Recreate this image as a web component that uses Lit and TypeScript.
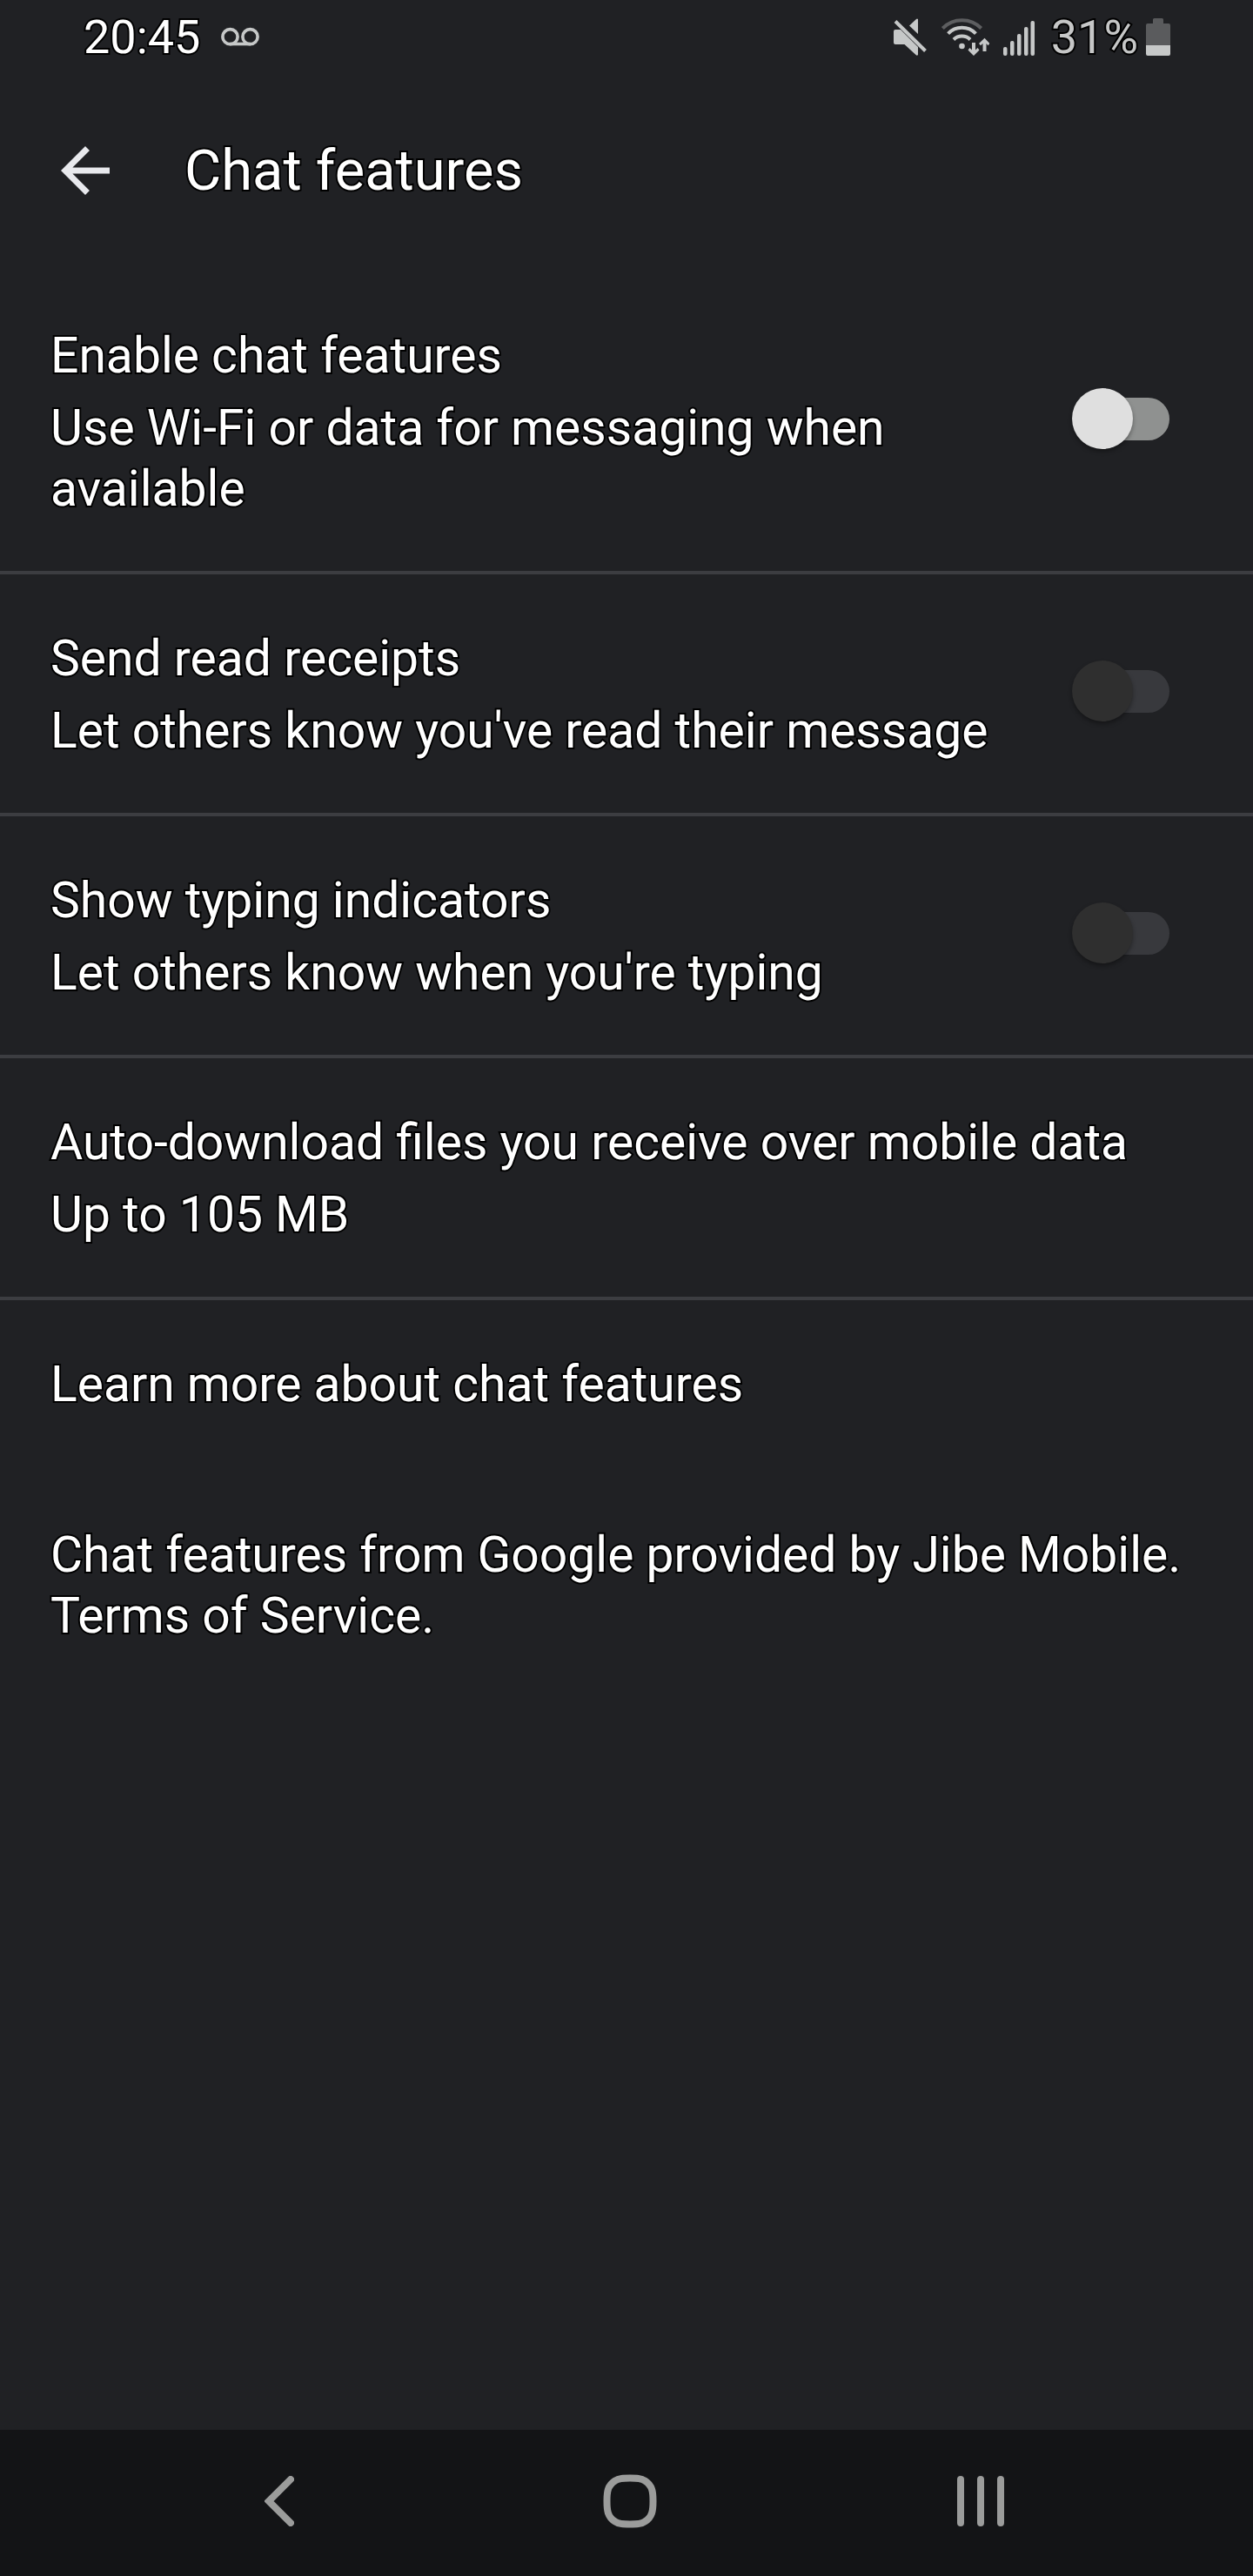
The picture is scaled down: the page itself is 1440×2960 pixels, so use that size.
import { LitElement, html, css } from "lit";
import { customElement, property } from "lit/decorators.js";

@customElement("status-bar")
class StatusBar extends LitElement {
  static styles = css`
    :host {
      display: flex;
      justify-content: space-between;
      align-items: center;
      height: 86px;
      padding: 0 95px 0 96px;
      font-size: 54px;
      line-height: 62px;
      color: #fff;
    }
    .side {
      display: flex;
      align-items: center;
    }
    .voicemail {
      margin-left: 24px;
    }
    .level {
      color: #c6c7c7;
      margin: 0 9px 0 19px;
    }
    .wifi {
      margin: 0 16px 0 17px;
    }
    svg {
      display: block;
      flex: none;
      fill: #c6c8c8;
    }
  `;

  render() {
    return html`
      <div class="side">
        <time>20:45</time>
        <svg class="voicemail" width="44" height="24" viewBox="0 0 44 24" aria-hidden="true">
          <g fill="none" stroke="#c6c8c8" stroke-width="3.6">
            <path d="M10 19.500h24" />
            <circle cx="10.500" cy="11.200" r="8.600" />
            <circle cx="33.500" cy="11.200" r="8.600" />
          </g>
        </svg>
      </div>
      <div class="side">
        <svg width="38" height="46" viewBox="0 0 38 46" aria-hidden="true">
          <path d="M28 2v17L18 9.500l8-7.500q1-1 2 0z" />
          <path d="M2 14h6l20 20v9q-1 1.500-2.500 0L12.500 31H2q-2 0-2-2V16q0-2 2-2z" />
          <path d="M2 4.500l34.500 34" fill="none" stroke="#c6c8c8" stroke-width="4" />
        </svg>
        <svg class="wifi" width="55" height="46" viewBox="0 0 55 46" aria-hidden="true">
          <g fill="none" stroke-width="4">
            <path d="M1.300 12.500a31 31 0 0 1 44.400 0" stroke="#5d5e60" />
            <path d="M7.600 18.600a22 22 0 0 1 31.800 0" stroke="#c6c8c8" />
            <path d="M14 25.500a13.500 13.500 0 0 1 19 0" stroke="#c6c8c8" />
          </g>
          <circle cx="23.500" cy="33" r="3.300" />
          <path d="M35 29h4v8.500l2.500-2.400 2 2.400L37 44l-6.500-6.500 2-2.400 2.500 2.400z" />
          <path d="M47.500 39h4v-9l2 2.200 2-2.200-6-6.300-6.500 6.300 2 2.200 2.500-2.200z" />
        </svg>
        <svg width="36" height="46" viewBox="0 0 36 46" aria-hidden="true">
          <rect x="0" y="34" width="4.500" height="10" rx="2" />
          <rect x="8" y="27" width="4.500" height="17" rx="2" />
          <rect x="16" y="19" width="4.500" height="25" rx="2" />
          <rect x="24" y="11" width="4.500" height="33" rx="2" />
          <rect x="31.500" y="4" width="4.500" height="40" rx="2" />
        </svg>
        <span class="level">31%</span>
        <svg width="28" height="46" viewBox="0 0 28 46" aria-hidden="true">
          <path d="M8 7V2.500q0-1.500 1.500-1.500h9q1.500 0 1.500 1.500V7h6q2 0 2 2v23H0V9q0-2 2-2z" fill="#5a5b5d" />
          <path d="M0 32h28v10q0 2-2 2H2q-2 0-2-2z" />
        </svg>
      </div>
    `;
  }
}

@customElement("setting-row")
class SettingRow extends LitElement {
  @property() heading = "";
  @property() summary = "";
  @property({ type: Boolean }) toggle = false;
  @property({ type: Boolean }) disabled = false;

  static styles = css`
    :host {
      display: block;
      border-bottom: 4px solid #3c3d41;
    }
    .row {
      box-sizing: border-box;
      display: flex;
      align-items: center;
      justify-content: space-between;
      gap: 56px;
      width: 100%;
      padding: 0 96px 0 58px;
      color: inherit;
      background: none;
      border: 0;
      font: inherit;
      text-align: left;
    }
    button.row {
      padding-right: 58px;
    }
    .text {
      display: flex;
      flex-direction: column;
      gap: 13px;
      padding: 62px 0 59px;
    }
    .switch {
      appearance: none;
      flex: none;
      display: grid;
      grid-template-columns: 14px 56px 42px;
      align-items: center;
      width: 112px;
      height: 70px;
      margin: 0 0 6px;
    }
    .switch::before {
      content: "";
      grid-area: 1 / 2 / 2 / 4;
      height: 49px;
      border-radius: 25px;
      background: #8f9190;
    }
    .switch::after {
      content: "";
      grid-area: 1 / 1 / 2 / 3;
      height: 70px;
      border-radius: 50%;
      background: #dfdfdf;
      box-shadow: 0 3px 5px rgba(0, 0, 0, 0.35);
    }
    .switch:checked::after {
      grid-area: 1 / 2 / 2 / 4;
      margin-left: 28px;
    }
    .switch:disabled::before {
      background: #38393d;
    }
    .switch:disabled::after {
      background: #2f2f2f;
    }
  `;

  render() {
    const text = html`
      <span class="text"><span>${this.heading}</span><span>${this.summary}</span></span>
    `;
    if (!this.toggle) {
      return html`<button class="row" type="button">${text}</button>`;
    }
    return html`
      <label class="row">
        ${text}
        <input class="switch" type="checkbox" role="switch" ?disabled=${this.disabled} />
      </label>
    `;
  }
}

@customElement("app-root")
class AppRoot extends LitElement {
  static styles = css`
    :host {
      display: flex;
      flex-direction: column;
      min-height: 100vh;
      background: #202124;
      color: #fff;
      font: 400 57px/70px Roboto, "Open Sans", sans-serif;
      -webkit-text-stroke: 4px #000;
      paint-order: stroke fill;
    }
    .bar {
      display: flex;
      align-items: center;
      gap: 72px;
      padding: 68px 56px 74px;
    }
    .bar h1 {
      margin: 0;
      font-size: 65px;
      line-height: 84px;
      font-weight: 400;
    }
    button {
      display: grid;
      place-items: center;
      padding: 0;
      border: 0;
      background: none;
    }
    svg {
      display: block;
    }
    main {
      flex: 1;
    }
    .learn,
    .legal {
      display: block;
      margin: 0;
      padding: 62px 58px 64px;
    }
    a {
      color: inherit;
      text-decoration: none;
    }
    .nav {
      display: flex;
      height: 168px;
      padding: 0 112px 0 119px;
      background: #131416;
    }
    .nav button {
      flex: 1;
      padding-bottom: 4px;
    }
    .nav svg {
      fill: none;
      stroke: #9b9c9b;
      stroke-width: 8;
      stroke-linecap: round;
    }
  `;

  render() {
    return html`
      <status-bar></status-bar>
      <header class="bar">
        <button type="button" aria-label="Back">
          <svg width="84" height="84" viewBox="0 0 24 24" fill="#e8e9ed">
            <path d="M20 11H7.830l5.590-5.590L12 4l-8 8 8 8 1.410-1.410L7.830 13H20z" />
          </svg>
        </button>
        <h1>Chat features</h1>
      </header>
      <main>
        <setting-row
          heading="Enable chat features"
          summary="Use Wi-Fi or data for messaging when available"
          toggle
        ></setting-row>
        <setting-row
          heading="Send read receipts"
          summary="Let others know you've read their message"
          toggle
          disabled
        ></setting-row>
        <setting-row
          heading="Show typing indicators"
          summary="Let others know when you're typing"
          toggle
          disabled
        ></setting-row>
        <setting-row
          heading="Auto-download files you receive over mobile data"
          summary="Up to 105 MB"
        ></setting-row>
        <a class="learn" href="#learn">Learn more about chat features</a>
        <p class="legal">
          Chat features from Google provided by Jibe Mobile.
          <a href="#terms">Terms of Service.</a>
        </p>
      </main>
      <nav class="nav">
        <button type="button" aria-label="Back">
          <svg width="34" height="58" viewBox="0 0 34 58"><path d="M30 4L5 29l25 25" /></svg>
        </button>
        <button type="button" aria-label="Home">
          <svg width="62" height="62" viewBox="0 0 62 62">
            <path d="M31 4.500c-7 0-13 0-17 3C5 13 4.500 21 4.500 31S5 49 14 54.500c4 3 10 3 17 3s13 0 17-3C57 49 57.500 41 57.500 31S57 13 48 7.500c-4-3-10-3-17-3z" />
          </svg>
        </button>
        <button type="button" aria-label="Recent apps">
          <svg width="54" height="58" viewBox="0 0 54 58"><path d="M4 4v50M27 4v50M50 4v50" /></svg>
        </button>
      </nav>
    `;
  }
}
